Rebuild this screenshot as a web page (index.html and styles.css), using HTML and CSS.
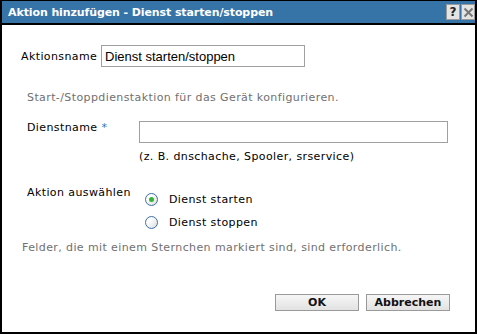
FILE: index.html
```html
<!DOCTYPE html>
<html lang="de">

<head>
    <meta charset="UTF-8">
    <title>Aktion hinzufügen - Dienst starten/stoppen</title>
    <link rel="stylesheet" href="styles.css">
</head>

<body>
    <div class="dialog">
        <div class="titlebar">
            <span class="title">Aktion hinzufügen - Dienst starten/stoppen</span>
            <div class="title-buttons">
                <span class="tbtn help">?</span>
                <span class="tbtn close">
                    <svg width="11" height="11" viewBox="0 0 11 11">
                        <path d="M1.5 1.5 L9.5 9.5 M9.5 1.5 L1.5 9.5" stroke="#777" stroke-width="2"/>
                    </svg>
                </span>
            </div>
        </div>

        <div class="content">
            <div class="name-row">
                <label class="name-label">Aktionsname</label>
                <input class="text-input name-input" type="text" value="Dienst starten/stoppen">
            </div>

            <p class="hint hint-top">Start-/Stoppdienstaktion für das Gerät konfigurieren.</p>

            <div class="service-row">
                <label class="side-label">Dienstname <span class="req">*</span></label>
                <div class="field">
                    <input class="text-input service-input" type="text">
                    <div class="example">(z. B. dnschache, Spooler, srservice)</div>
                </div>
            </div>

            <div class="action-row">
                <label class="side-label">Aktion auswählen</label>
                <div class="radios">
                    <div class="radio-row"><span class="radio checked"></span>Dienst starten</div>
                    <div class="radio-row"><span class="radio"></span>Dienst stoppen</div>
                </div>
            </div>

            <p class="hint hint-bottom">Felder, die mit einem Sternchen markiert sind, sind erforderlich.</p>

            <div class="buttons">
                <button class="btn">OK</button>
                <button class="btn">Abbrechen</button>
            </div>
        </div>
    </div>
</body>

</html>
```

FILE: styles.css
```css
* {
    margin: 0;
    padding: 0;
    box-sizing: border-box;
}

body {
    font-family: "DejaVu Sans", Verdana, sans-serif;
    font-size: 11px;
    letter-spacing: 0.4px;
    color: #000;
    background-color: #fff;
}

.dialog {
    width: 477px;
    height: 334px;
    border: 2px solid #000;
    border-top-width: 1px;
    display: flex;
    flex-direction: column;
}

.titlebar {
    height: 24px;
    background-color: #3674a8;
    border-bottom: 2px solid #000;
    display: flex;
    align-items: center;
    justify-content: space-between;
    padding: 0 0 0 6px;
}

.title {
    color: #fff;
    font-weight: bold;
    font-size: 11px;
    letter-spacing: -0.1px;
}

.title-buttons {
    display: flex;
    gap: 1px;
    align-self: flex-start;
    margin-top: 3px;
}

.tbtn {
    width: 14px;
    height: 16px;
    background-color: #e4e4e4;
    border: 1px solid #9a9a9a;
    display: flex;
    align-items: center;
    justify-content: center;
    letter-spacing: 0;
}

.help {
    font-weight: bold;
    font-size: 12px;
    color: #222;
}

.content {
    flex: 1;
    padding: 20px 25px 0 19px;
    display: flex;
    flex-direction: column;
}

.name-row {
    display: flex;
    align-items: center;
}

.name-label {
    width: 80px;
}

.text-input {
    height: 22px;
    border: 1px solid #a0a0a0;
    font-family: "Liberation Sans", Arial, sans-serif;
    font-size: 13px;
    letter-spacing: 0;
    padding: 0 3px;
    color: #000;
    outline: none;
}

.name-input {
    width: 204px;
}

.hint {
    color: #707070;
    line-height: 14px;
}

.hint-top {
    margin: 24px 0 0 6px;
}

.service-row,
.action-row {
    display: flex;
    align-items: flex-start;
    margin-left: 6px;
}

.service-row {
    margin-top: 16px;
}

.side-label {
    width: 112px;
    line-height: 14px;
}

.req {
    color: #3674a8;
}

.service-input {
    width: 309px;
}

.example {
    margin-top: 7px;
    line-height: 14px;
}

.action-row {
    margin-top: 22px;
}

.radios {
    padding-top: 2px;
}

.radio-row {
    height: 23px;
    display: flex;
    align-items: center;
    line-height: 14px;
}

.radio {
    width: 13px;
    height: 13px;
    border-radius: 50%;
    border: 1px solid #3a6ea8;
    background: linear-gradient(135deg, #ffffff 30%, #dcdcdc);
    margin: 0 11px 0 6px;
    display: flex;
    align-items: center;
    justify-content: center;
}

.radio.checked::after {
    content: "";
    width: 5px;
    height: 5px;
    border-radius: 50%;
    background-color: #33b533;
}

.hint-bottom {
    margin-top: 7px;
    margin-left: 1px;
}

.buttons {
    display: flex;
    justify-content: flex-end;
    gap: 7px;
    margin-top: 39px;
}

.btn {
    width: 84px;
    height: 17px;
    border: 1px solid #9a9a9a;
    background: linear-gradient(#f6f6f6, #e2e2e2);
    font-family: "DejaVu Sans", Verdana, sans-serif;
    font-weight: bold;
    font-size: 11px;
    letter-spacing: 0;
    color: #111;
}
```
